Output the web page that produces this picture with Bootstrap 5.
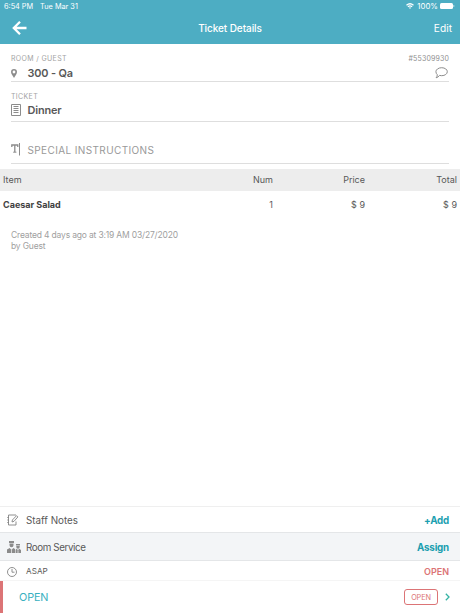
<!DOCTYPE html>
<html lang="en">
<head>
<meta charset="utf-8">
<meta name="viewport" content="width=device-width, initial-scale=1">
<title>Ticket Details</title>
<link href="https://cdn.jsdelivr.net/npm/bootstrap@5.3.0/dist/css/bootstrap.min.css" rel="stylesheet">
<style>
body{font-family:Inter,"Liberation Sans",sans-serif;font-size:9px;line-height:11px;color:#585858;height:613px;overflow:hidden;background:#fff}
svg{display:block;flex:none}
.topbar{background:#4dadc3;height:44px;color:#fff}
.statusbar{height:12px;font-size:7.3px;padding:0 5px 0 4px}
.s-date{margin-left:7px}
.s-pct{font-size:7.8px;margin:0 2px 0 3px}
.titlebar{height:32px;padding:0 8px 0 12px;font-size:10.2px}
.titlebar>*{flex:1 1 0}
.titlebar h1{font-size:10px;font-weight:500;line-height:12px;letter-spacing:-.08px;padding-right:4px;white-space:nowrap}
.field-line{margin:0 11px;border-bottom:1px solid #dedede}
.field-label{font-size:7px;line-height:9px;letter-spacing:.35px;color:#a3a3a3}
.ticket-no{letter-spacing:.15px;color:#8f8f8f}
.field-value{font-size:10.9px;line-height:14px;font-weight:600;color:#585858;letter-spacing:-.15px;margin-top:3px}
.chat-icon{margin-right:1px}
.icon-slot{width:16.5px;flex:none}
.room-field{height:38px;padding-top:10px}
.ticket-field{height:40px;padding-top:10px}
.ticket-field .field-value{margin-top:2px}
.instructions{height:42px;padding-top:21px;font-size:10px;line-height:14px;letter-spacing:.38px;color:#999}
.items{margin-top:5px;table-layout:fixed}
.items th,.items td{font-weight:400;padding:0 3px 2px;text-align:right}
.items th:first-child,.items td:first-child{text-align:left}
.items th{background:#ededed;height:22px}
.items td{height:28px}
.items td:first-child{font-weight:700;color:#424242}
.c-money{width:92px}
.created{margin:11px 11px 0;font-size:8.5px;line-height:11px;letter-spacing:-.17px;color:#a0a0a0}
.panel-row{padding:0 11px 0 7px;border-bottom:1px solid #e4e6e8;font-size:9.8px}
.panel-row .icon-slot{width:19px}
.panel-row .teal{letter-spacing:-.2px}
.teal{color:#1c9fb0}
.coral{color:#dc7476}
.row-notes{height:27px;border-top:1px solid #efefef;padding-top:1px}
.row-service{height:28px;background:#f3f5f7;padding-top:1px;letter-spacing:-.4px}
.row-asap{height:20px;font-size:8.200px;border-color:#f5f5f5;padding-top:2px}
.asap-state{font-size:9px;font-weight:600}
.row-open{height:32px;border-left:3px solid #dc7476;padding:0 10px 0 16px;font-size:10.8px;color:#39b0c0;letter-spacing:-.1px}
.open-tag{width:34px;height:16px;border:1px solid #dc7476;border-radius:3px;font-size:7.300px;margin-right:7px}
</style>
<script src="https://cdn.jsdelivr.net/npm/bootstrap@5.3.0/dist/js/bootstrap.bundle.min.js"></script>
</head>
<body class="d-flex flex-column">
<header class="topbar">
  <div class="statusbar d-flex align-items-center justify-content-between">
    <div class="d-flex"><span>6:54 PM</span><span class="s-date">Tue Mar 31</span></div>
    <div class="d-flex align-items-center">
      <svg width="8" height="6" viewBox="0 0 8 6" fill="none" stroke="#fff" stroke-width="1.2"><path d="M.5 2.300Q4-.8 7.500 2.300M1.900 3.800Q4 2 6.100 3.800"/><path d="M3 4.700 4 6 5 4.700Q4 4 3 4.700" fill="#fff" stroke="none"/></svg>
      <span class="s-pct">100%</span>
      <svg width="15" height="6" viewBox="0 0 15 6"><rect width="13" height="6" rx="1.500" fill="#fff"/><path d="M13.800 2v2" stroke="#b6dde6"/></svg>
    </div>
  </div>
  <div class="titlebar d-flex align-items-center">
    <div><svg width="15" height="14" viewBox="0 0 15 14" fill="none" stroke="#fff" stroke-width="2.300"><path d="M14.500 7H2M8 .8 1.800 7 8 13.200"/></svg></div>
    <h1 class="m-0 text-center">Ticket Details</h1>
    <div class="text-end">Edit</div>
  </div>
</header>
<main class="flex-grow-1">
  <section class="field-line room-field">
    <div class="d-flex justify-content-between field-label"><span>ROOM / GUEST</span><span class="ticket-no">#55309930</span></div>
    <div class="d-flex align-items-center field-value">
      <span class="icon-slot"><svg width="6" height="9" viewBox="0 0 6 9"><path fill="#8c8c8c" fill-rule="evenodd" d="M3 0a3 3 0 0 1 3 3C6 5 4 6.800 3 9 2 6.800 0 5 0 3a3 3 0 0 1 3-3m0 1.600a1.400 1.400 0 1 0 0 2.800 1.400 1.400 0 0 0 0-2.800"/></svg></span>
      <span>300 - Qa</span>
      <svg class="ms-auto chat-icon" width="13" height="12" viewBox="0 0 13 12" fill="none" stroke="#8c8c8c"><path d="M6.700.7c3.200 0 5.600 1.800 5.600 4s-2.400 4-5.600 4c-.8 0-1.500-.1-2.200-.3-.8 1.300-1.900 2-3.400 2.400.8-.9 1.200-1.900 1.200-3.100C1.500 7 .900 5.900.9 4.700c0-2.200 2.600-4 5.800-4Z"/></svg>
    </div>
  </section>
  <section class="field-line ticket-field">
    <div class="field-label">TICKET</div>
    <div class="d-flex align-items-center field-value">
      <span class="icon-slot"><svg width="10" height="12" viewBox="0 0 10 12" fill="none" stroke="#8c8c8c"><path d="M.5.5h9v11h-9z"/><path d="M2.500 2.500h5M2.500 4.500h5M2.500 6.500h5M2.500 8.500h5"/></svg></span>
      <span>Dinner</span>
    </div>
  </section>
  <section class="field-line instructions d-flex">
    <span class="icon-slot"><svg width="10" height="13" viewBox="0 0 10 13" fill="none" stroke="#8c8c8c"><path d="M.8 4V2h6v2M3.800 2v7" stroke-width="1.300"/><path d="M2.200 9.200h3.200M8.500 0v12.500"/></svg></span>
    <span>SPECIAL INSTRUCTIONS</span>
  </section>
  <table class="items w-100">
    <colgroup><col><col class="c-money"><col class="c-money"><col class="c-money"></colgroup>
    <thead><tr><th>Item</th><th>Num</th><th>Price</th><th>Total</th></tr></thead>
    <tbody><tr><td>Caesar Salad</td><td>1</td><td>$ 9</td><td>$ 9</td></tr></tbody>
  </table>
  <p class="created">Created 4 days ago at 3:19 AM 03/27/2020<br>by Guest</p>
</main>
<footer>
  <div class="panel-row row-notes d-flex align-items-center">
    <span class="icon-slot"><svg width="12" height="12" viewBox="0 0 12 12" fill="none" stroke="#858585" stroke-width=".9"><path d="M9 1H1.500v10H9V7.500M2 3.500H.3M2 6H.3M2 8.500H.3"/><path d="m5 8 .4-2L9.500 1.700l1.400 1.200L7 7.300z"/></svg></span>
    <span>Staff Notes</span><span class="ms-auto fw-bold teal">+Add</span>
  </div>
  <div class="panel-row row-service d-flex align-items-center">
    <span class="icon-slot"><svg width="14" height="12" viewBox="0 0 14 12" fill="#8b8b8b"><path d="M2 0h5v2H2zM2.500 2.500h4v1.800a2 2 0 0 1-4 0zM0 12V8.500L2.700 7l1.800 2 1.800-2L8 8v4zM9 3h4v1.500H9zM9.300 5h3.400v1a1.700 1.700 0 0 1-3.400 0zM8.600 12V8.800l1.200-1 1.200 1.500 1.200-1.500L14 9v3z"/><path d="M4.500 9v3M11 9.300V12" stroke="#f3f5f7" stroke-width=".7"/></svg></span>
    <span>Room Service</span><span class="ms-auto fw-bold teal">Assign</span>
  </div>
  <div class="panel-row row-asap d-flex align-items-center">
    <span class="icon-slot"><svg width="10" height="10" viewBox="0 0 10 10" fill="none" stroke="#858585" stroke-width=".9"><circle cx="5" cy="5" r="4.500"/><path d="M5 2v3.200h2.500"/></svg></span>
    <span>ASAP</span><span class="ms-auto coral asap-state">OPEN</span>
  </div>
  <div class="row-open d-flex align-items-center">
    <span>OPEN</span>
    <span class="open-tag coral ms-auto d-flex align-items-center justify-content-center">OPEN</span>
    <svg width="5" height="8" viewBox="0 0 5 8" fill="none" stroke="#35b3a4" stroke-width="1.300"><path d="m.8.800 3.200 3.200L.8 7.200"/></svg>
  </div>
</footer>
</body>
</html>
